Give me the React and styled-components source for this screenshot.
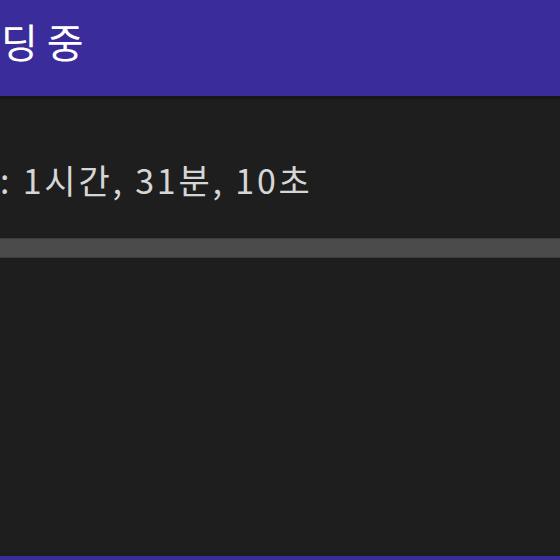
import React from "react";
import styled, { createGlobalStyle } from "styled-components";

const GlobalStyle = createGlobalStyle`
  html, body {
    margin: 0;
    padding: 0;
    background: #1e1e1e;
  }
  #root {
    height: 560px;
  }
`;

const Window = styled.div`
  width: 560px;
  height: 560px;
  display: flex;
  flex-direction: column;
  background: #1e1e1e;
  overflow: hidden;
  font-family: "Noto Sans CJK KR", "Noto Sans", sans-serif;
`;

const TitleBar = styled.div`
  height: 99px;
  flex-shrink: 0;
  background: #3a2c9b;
  border-bottom: 3px solid #171717;
  display: flex;
  align-items: center;
  padding-left: 1px;
  padding-bottom: 14px;
  box-sizing: border-box;
`;

const Label = styled.span`
  white-space: nowrap;
  color: ${(p) => p.$color || "#ffffff"};
  font-size: ${(p) => p.$size}px;
  letter-spacing: ${(p) => p.$spacing || 0}px;
  line-height: 1;
`;

const Body = styled.div`
  flex: 1;
  display: flex;
  flex-direction: column;
  padding-top: 62px;
`;

const TimeRow = styled.div`
  height: 38px;
  display: flex;
  align-items: center;
`;

const Track = styled.div`
  margin-top: 39px;
  height: 20px;
  background: #4b4b4b;
  border-top: 1px solid #3c3c3c;
  border-bottom: 1px solid #3c3c3c;
  box-sizing: border-box;
`;

const Spacer = styled.div`
  flex: 1;
`;

const BottomEdge = styled.div`
  height: 4px;
  background: #3a2c9b;
  border-top: 1px solid #1a1a2a;
`;

export default function App() {
  return (
    <>
      <GlobalStyle />
      <Window>
        <TitleBar>
          <Label $size={40}>딩 중</Label>
        </TitleBar>
        <Body>
          <TimeRow>
            <Label $size={34} $spacing={2.8} $color="#d6d6d6">
              : 1시간, 31분, 10초
            </Label>
          </TimeRow>
          <Track />
          <Spacer />
          <BottomEdge />
        </Body>
      </Window>
    </>
  );
}
